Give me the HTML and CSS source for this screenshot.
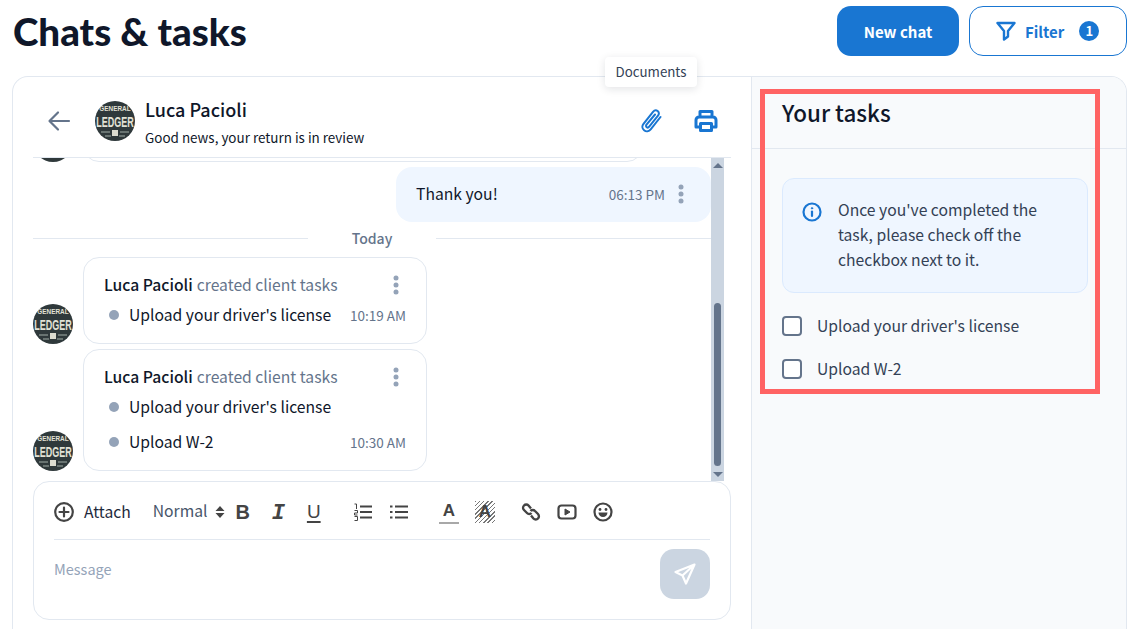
FILE: index.html
```html
<!DOCTYPE html>
<html lang="en">
<head>
    <meta charset="UTF-8">
    <title>Chats &amp; tasks</title>
    <link rel="stylesheet" href="styles.css">
</head>
<body>
    <header class="page-header">
        <h1>Chats &amp; tasks</h1>
        <div class="header-actions">
            <button class="btn btn-primary">New chat</button>
            <button class="btn btn-outline">
                <svg width="20" height="20" viewBox="0 0 20 20" fill="none" stroke="currentColor" stroke-width="2.400" stroke-linejoin="round"><path d="M1.500 2h17l-6.500 8v5.500L8 18.500V10z"/></svg>
                <span class="btn-label">Filter</span>
                <span class="count">1</span>
            </button>
        </div>
    </header>

    <main class="board">
        <section class="chat">
            <div class="chat-header">
                <svg class="back" width="24" height="24" viewBox="0 0 24 24" fill="none" stroke="#64748b" stroke-width="2.200" stroke-linecap="round" stroke-linejoin="round"><path d="M22 12H3M11 3.500L2.500 12l8.500 8.500"/></svg>
                <svg class="avatar" viewBox="0 0 40 40"><rect width="40" height="40" fill="#2f393b"/><text transform="translate(20 10) scale(.8 1)" class="logo-small">GENERAL</text><text transform="translate(20 26) scale(.6 1)" class="logo-big">LEDGER</text><path d="M17 29h6v6h-6z" fill="#dcdcd0"/><path d="M6 31h9M25 31h9M10 35h6M24 35h6" stroke="#7c8684" stroke-width="1.500"/></svg>
                <div class="chat-who">
                    <div class="chat-name">Luca Pacioli</div>
                    <div class="chat-status">Good news, your return is in review</div>
                </div>
                <div class="chat-tools">
                    <svg width="24" height="24" viewBox="0 0 24 24" fill="none" stroke="#1976d2" stroke-width="2" stroke-linecap="round" stroke-linejoin="round"><path d="M21.500 8l-9.800 12.300c-1.800 2.200-4.600 2.600-6.600 1s-2.300-4.300-.6-6.500L14 2.800c1.300-1.600 3.300-1.900 4.700-.8s1.600 3.100.3 4.700l-8.800 11c-.7.900-1.800 1-2.500.5s-.9-1.600-.2-2.500L16 5.500"/></svg>
                    <svg width="24" height="24" viewBox="0 0 24 24" fill="none" stroke="#1976d2" stroke-width="3" stroke-linejoin="round"><path d="M6 8V2.500h12V8M6 18H2V11a3 3 0 0 1 3-3h14a3 3 0 0 1 3 3v7h-4"/><path d="M6.500 14.500h11v7h-11z"/></svg>
                </div>
            </div>

            <div class="chat-body">
                <div class="messages">
                    <div class="msg">
                        <span class="avatar avatar-clipped"></span>
                        <div class="bubble bubble-clipped"></div>
                    </div>
                    <div class="own">
                        <span class="own-text">Thank you!</span>
                        <span class="time">06:13 PM</span>
                        <svg class="kebab" viewBox="0 0 6 20"><circle cx="3" cy="3" r="2.500"/><circle cx="3" cy="10" r="2.500"/><circle cx="3" cy="17" r="2.500"/></svg>
                    </div>
                    <div class="day"><span>Today</span></div>
                    <div class="msg">
                        <svg class="avatar" viewBox="0 0 40 40"><rect width="40" height="40" fill="#2f393b"/><text transform="translate(20 10) scale(.8 1)" class="logo-small">GENERAL</text><text transform="translate(20 26) scale(.6 1)" class="logo-big">LEDGER</text><path d="M17 29h6v6h-6z" fill="#dcdcd0"/><path d="M6 31h9M25 31h9M10 35h6M24 35h6" stroke="#7c8684" stroke-width="1.500"/></svg>
                        <div class="bubble">
                            <div class="bubble-head">
                                <b>Luca Pacioli</b> <span class="muted">created client tasks</span>
                                <svg class="kebab" viewBox="0 0 6 20"><circle cx="3" cy="3" r="2.500"/><circle cx="3" cy="10" r="2.500"/><circle cx="3" cy="17" r="2.500"/></svg>
                            </div>
                            <div class="task-line">
                                <i class="dot"></i><span>Upload your driver's license</span>
                                <span class="time">10:19 AM</span>
                            </div>
                        </div>
                    </div>
                    <div class="msg">
                        <svg class="avatar" viewBox="0 0 40 40"><rect width="40" height="40" fill="#2f393b"/><text transform="translate(20 10) scale(.8 1)" class="logo-small">GENERAL</text><text transform="translate(20 26) scale(.6 1)" class="logo-big">LEDGER</text><path d="M17 29h6v6h-6z" fill="#dcdcd0"/><path d="M6 31h9M25 31h9M10 35h6M24 35h6" stroke="#7c8684" stroke-width="1.500"/></svg>
                        <div class="bubble">
                            <div class="bubble-head">
                                <b>Luca Pacioli</b> <span class="muted">created client tasks</span>
                                <svg class="kebab" viewBox="0 0 6 20"><circle cx="3" cy="3" r="2.500"/><circle cx="3" cy="10" r="2.500"/><circle cx="3" cy="17" r="2.500"/></svg>
                            </div>
                            <div class="task-line">
                                <i class="dot"></i><span>Upload your driver's license</span>
                            </div>
                            <div class="task-line task-line-next">
                                <i class="dot"></i><span>Upload W-2</span>
                                <span class="time">10:30 AM</span>
                            </div>
                        </div>
                    </div>
                </div>
                <div class="scrollbar">
                    <i class="arrow-up"></i>
                    <div class="thumb-track"><div class="thumb"></div></div>
                    <i class="arrow-down"></i>
                </div>
            </div>

            <div class="composer">
                <div class="toolbar">
                    <span class="attach">
                        <svg width="20" height="20" viewBox="0 0 20 20" fill="none" stroke="#444" stroke-width="2.200" stroke-linecap="round"><circle cx="10" cy="10" r="8.800"/><path d="M10 5.500v9M5.500 10h9"/></svg>
                        Attach
                    </span>
                    <span class="format">Normal
                        <svg width="10" height="14" viewBox="0 0 10 14" fill="#444"><path d="M5 1l4.500 5H.5zM5 13L.5 8h9z"/></svg>
                    </span>
                    <span class="tool tool-b">B</span>
                    <span class="tool tool-i">I</span>
                    <span class="tool tool-u">U</span>
                    <svg class="tool tool-ol" width="20" height="20" viewBox="0 0 20 20" fill="none" stroke="#444" stroke-width="2.200"><path d="M7 4.500h12M7 10h12M7 15.500h12"/><path d="M1.500 2h2v5M1.500 8.500h3v2.500h-3v2h3M1.500 14.500h3v4h-3" stroke-width="1"/></svg>
                    <svg class="tool" width="20" height="20" viewBox="0 0 20 20" fill="none" stroke="#444" stroke-width="2.200"><path d="M6 4.500h13M6 10h13M6 15.500h13M1 4.500h2.500M1 10h2.500M1 15.500h2.500"/></svg>
                    <span class="tool tool-color">A</span>
                    <span class="tool tool-bg">A</span>
                    <svg class="tool tool-link" width="20" height="20" viewBox="0 0 20 20" fill="none" stroke="#444" stroke-width="2.400"><path d="M10 6.500L7.500 3.500a3 3 0 0 0-4.500 0 3.200 3.200 0 0 0 0 4.500l3 3a3 3 0 0 0 4.500 0"/><path d="M10 13.500l2.500 3a3 3 0 0 0 4.500 0 3.200 3.200 0 0 0 0-4.500l-3-3a3 3 0 0 0-4.500 0"/></svg>
                    <svg class="tool" width="20" height="20" viewBox="0 0 20 20" fill="none" stroke="#444" stroke-width="2.200"><rect x="1.500" y="3.500" width="17" height="13" rx="3"/><path d="M8 7l5 3-5 3z" fill="#444" stroke-width="1"/></svg>
                    <svg class="tool" width="20" height="20" viewBox="0 0 20 20" fill="none" stroke="#444" stroke-width="2.200"><circle cx="10" cy="10" r="8.500"/><circle cx="7" cy="7.500" r="1.400" fill="#444" stroke="none"/><circle cx="13" cy="7.500" r="1.400" fill="#444" stroke="none"/><path d="M5.500 10.500h9a4.500 4.500 0 0 1-9 0z" fill="#444" stroke="none"/></svg>
                </div>
                <div class="composer-input">
                    <span class="placeholder">Message</span>
                    <span class="send">
                        <svg width="24" height="24" viewBox="0 0 24 24" fill="none" stroke="#fff" stroke-width="2.200" stroke-linejoin="round"><path d="M21.500 2.500L2.500 10l7 3.500 3.500 8zM21.500 2.500L9.500 13.500"/></svg>
                    </span>
                </div>
            </div>
        </section>

        <aside class="tasks">
            <h2 class="tasks-title">Your tasks</h2>
            <div class="tasks-body">
                <div class="notice">
                    <svg width="20" height="20" viewBox="0 0 20 20" fill="none" stroke="#1976d2" stroke-width="2.200" stroke-linecap="round"><circle cx="10" cy="10" r="8.500"/><path d="M10 9.500v4.500"/><circle cx="10" cy="6.300" r=".7" fill="#1976d2" stroke-width="1"/></svg>
                    <p>Once you've completed the task, please check off the checkbox next to it.</p>
                </div>
                <label class="check"><i class="box"></i>Upload your driver's license</label>
                <label class="check"><i class="box"></i>Upload W-2</label>
            </div>
        </aside>
    </main>

    <div class="tooltip">Documents</div>
    <div class="highlight"></div>
</body>
</html>
```

FILE: styles.css
```css
:root {
    --blue: #1976d2;
    --ink: #0f172a;
    --line: #e2e8f0;
    --slate: #64748b;
    --soft: #94a3b8;
}

* {
    box-sizing: border-box;
}

html, body {
    height: 100%;
}

body {
    margin: 0;
    overflow: hidden;
    position: relative;
    padding: 0 6px 0 12px;
    font-family: "Noto Sans CJK SC", "Lato", sans-serif;
    font-size: 15.700px;
    line-height: 22px;
    color: var(--ink);
    background: #fff;
}

.logo-small, .logo-big {
    font-family: "Liberation Sans", sans-serif;
    font-weight: bold;
    fill: #e2e2d6;
    text-anchor: middle;
}

.logo-small {
    font-size: 8px;
}

.logo-big {
    font-size: 15px;
}

.page-header {
    display: flex;
    justify-content: space-between;
    height: 76px;
    padding-top: 6px;
}

h1 {
    margin: 0 0 0 1px;
    font-family: "Lato", sans-serif;
    font-size: 38.500px;
    font-weight: 900;
    line-height: 50px;
    color: var(--ink);
}

.header-actions {
    display: flex;
    gap: 10px;
}

.btn {
    height: 50px;
    border-radius: 14px;
    font-family: inherit;
    font-size: 15px;
    font-weight: 700;
}

.btn-primary {
    width: 122px;
    color: #fff;
    background: var(--blue);
    border: 0;
}

.btn-outline {
    width: 158px;
    display: flex;
    align-items: center;
    padding: 0 0 0 26px;
    color: var(--blue);
    background: #fff;
    border: 1px solid var(--blue);
}

.btn-label {
    margin-left: 9px;
}

.count {
    width: 20px;
    height: 20px;
    margin-left: 15px;
    border-radius: 50%;
    font-size: 13px;
    line-height: 20px;
    color: #fff;
    background: var(--blue);
}

.board {
    display: flex;
    height: 553px;
    border: 1px solid var(--line);
    border-bottom: 0;
    border-radius: 16px 16px 0 0;
    overflow: hidden;
}

.chat {
    width: 739px;
    flex-shrink: 0;
    padding: 0 20px;
    border-right: 1px solid var(--line);
}

.chat-header {
    display: flex;
    align-items: center;
    height: 81px;
    padding: 8px 0 0 14px;
    border-bottom: 1px solid var(--line);
}

.avatar {
    display: block;
    flex-shrink: 0;
    width: 40px;
    height: 40px;
    border-radius: 50%;
}

.avatar-clipped {
    background: #2f393b;
}

.chat-header .avatar {
    margin-left: 24px;
}

.chat-who {
    margin-left: 10px;
    padding-top: 2px;
    flex: 1;
}

.chat-name {
    font-size: 18px;
    font-weight: 500;
    line-height: 26px;
}

.chat-status {
    margin-top: 3px;
    font-size: 13.450px;
    line-height: 24px;
}

.chat-tools {
    display: flex;
    gap: 31px;
    padding-right: 13px;
}

.chat-body {
    display: flex;
    height: 323px;
    padding-right: 7px;
}

.messages {
    flex: 1;
    min-width: 0;
    display: flex;
    flex-direction: column;
    justify-content: flex-end;
    overflow: hidden;
    padding-bottom: 10px;
}

.msg {
    display: flex;
    align-items: flex-end;
    gap: 10px;
    margin-top: 5px;
    flex-shrink: 0;
}

.bubble {
    width: 344px;
    padding: 16px 20px 17px;
    border: 1px solid var(--line);
    border-radius: 16px;
}

.bubble-clipped {
    width: 560px;
    height: 60px;
}

.bubble-head {
    display: flex;
    align-items: center;
    gap: 4px;
}

.bubble-head b {
    font-weight: 500;
}

.muted {
    color: var(--slate);
}

.kebab {
    width: 6px;
    height: 20px;
    fill: var(--soft);
}

.bubble-head .kebab {
    margin-left: auto;
    margin-right: 7px;
}

.task-line {
    display: flex;
    align-items: center;
    margin-top: 8px;
}

.task-line-next {
    margin-top: 13px;
}

.dot {
    width: 10px;
    height: 10px;
    margin: 0 10px 0 5px;
    border-radius: 50%;
    background: var(--soft);
}

.time {
    margin-left: auto;
    font-size: 13.500px;
    color: var(--slate);
}

.own {
    flex-shrink: 0;
    align-self: flex-end;
    display: flex;
    align-items: center;
    width: 315px;
    height: 55px;
    margin-top: 5px;
    padding: 0 27px 2px 20px;
    background: #eff6ff;
    border-radius: 16px;
}

.own .kebab {
    margin-left: 13px;
}

.day {
    flex-shrink: 0;
    height: 30px;
    text-align: center;
    line-height: 32px;
    font-size: 14px;
    font-weight: 500;
    color: var(--slate);
    background: linear-gradient(var(--line), var(--line)) 0 16px / 100% 1px no-repeat;
}

.day span {
    display: inline-block;
    width: 128px;
    background: #fff;
}

.scrollbar {
    flex-shrink: 0;
    display: flex;
    flex-direction: column;
    align-items: center;
    width: 13px;
    background: #cbd5e1;
}

.arrow-up, .arrow-down {
    display: block;
    flex-shrink: 0;
    width: 0;
    margin: 5px 0 4px;
    border-left: 5px solid transparent;
    border-right: 5px solid transparent;
}

.arrow-up {
    border-bottom: 5px solid var(--slate);
}

.arrow-down {
    border-top: 5px solid var(--slate);
}

.thumb-track {
    flex: 1;
    display: flex;
    align-items: flex-end;
}

.thumb {
    width: 7px;
    height: 163px;
    margin-bottom: 1px;
    border-radius: 4px;
    background: var(--slate);
}

.composer {
    height: 139px;
    padding: 0 20px;
    border: 1px solid var(--line);
    border-radius: 16px;
}

.toolbar {
    display: flex;
    align-items: center;
    height: 58px;
    padding-top: 3px;
    border-bottom: 1px solid var(--line);
    color: #444;
}

.attach {
    display: flex;
    align-items: center;
    gap: 10px;
    color: #1e293b;
}

.format {
    display: flex;
    align-items: center;
    justify-content: space-between;
    width: 72px;
    margin-left: 22px;
    padding-bottom: 2px;
    color: #475569;
}

.format svg {
    margin-top: 2px;
}

.tool {
    display: block;
    flex-shrink: 0;
    width: 20px;
    margin-left: 16px;
    text-align: center;
    font-family: "Liberation Sans", sans-serif;
}

.tool-b {
    margin-left: 8px;
    font-size: 20px;
    font-weight: 700;
}

.tool-i {
    margin-left: 15.500px;
    padding-top: 3px;
    font-family: "Liberation Mono", monospace;
    font-size: 22px;
    font-style: italic;
    font-weight: 700;
}

.tool-u {
    margin-left: 15.500px;
    font-size: 19px;
    text-decoration: underline;
    text-decoration-thickness: 2px;
    text-underline-offset: 3px;
}

.tool-ol {
    margin-left: 29px;
}

.tool-color {
    margin-left: 30px;
    font-size: 17px;
    font-weight: 700;
    border-bottom: 2px solid #a8a8a8;
}

.tool-bg {
    font-size: 17px;
    font-weight: 700;
    background: repeating-linear-gradient(135deg, #777 0 1px, #fff 1px 3px);
}

.tool-link {
    margin-left: 26px;
}

.composer-input {
    display: flex;
    justify-content: space-between;
    padding-top: 9px;
}

.placeholder {
    margin-top: 9px;
    font-size: 14.500px;
    color: var(--soft);
}

.send {
    display: flex;
    align-items: center;
    justify-content: center;
    width: 50px;
    height: 50px;
    border-radius: 14px;
    background: #cbd5e1;
}

.tasks {
    flex: 1;
    background: #f8fafc;
}

.tasks-title {
    height: 72px;
    margin: 0;
    padding: 0 30px;
    border-bottom: 1px solid var(--line);
    font-size: 22.400px;
    font-weight: 500;
    line-height: 71px;
}

.tasks-body {
    padding: 29px 38px 0 30px;
}

.notice {
    display: flex;
    gap: 16px;
    height: 115px;
    padding: 18px 30px 18px 19px;
    background: #eff6ff;
    border: 1px solid #dbeafe;
    border-radius: 12px;
}

.notice svg {
    flex-shrink: 0;
    margin-top: 5px;
}

.notice p {
    margin: 0;
    line-height: 25px;
    color: #334155;
}

.check {
    display: flex;
    align-items: center;
    gap: 15px;
    height: 20px;
    margin-top: 23px;
    color: #334155;
}

.box {
    width: 20px;
    height: 20px;
    background: #fff;
    border: 2px solid var(--slate);
    border-radius: 4px;
}

.tooltip {
    position: absolute;
    top: 57px;
    left: 605px;
    width: 92px;
    height: 30px;
    text-align: center;
    font-size: 13.300px;
    line-height: 30px;
    color: #334155;
    background: #fff;
    border-radius: 4px;
    box-shadow: 0 2px 8px rgba(15, 23, 42, 0.12);
}

.highlight {
    position: absolute;
    top: 89px;
    left: 760px;
    width: 340px;
    height: 305px;
    border: 5px solid #ff6363;
}
```
